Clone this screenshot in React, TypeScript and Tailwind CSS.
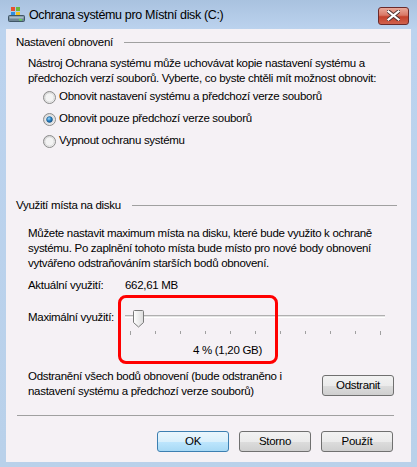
import React from 'react'

const font = { fontFamily: '"Segoe UI", "Liberation Sans", Arial, sans-serif' }

const Radio = ({ checked }: { checked?: boolean }) => (
	<svg width="13" height="13" viewBox="0 0 13 13" className="shrink-0">
		<defs>
			<linearGradient id="rb" x1="0" y1="0" x2="1" y2="1">
				<stop offset="0" stopColor="#cfcfcf" />
				<stop offset="1" stopColor="#f8f8f8" />
			</linearGradient>
			<radialGradient id="rd" cx="0.4" cy="0.35" r="0.7">
				<stop offset="0" stopColor="#9fd8fb" />
				<stop offset="0.5" stopColor="#2d86c7" />
				<stop offset="1" stopColor="#0b4f8a" />
			</radialGradient>
		</defs>
		<circle cx="6.5" cy="6.5" r="6" fill="url(#rb)" stroke="#8b8b8b" strokeWidth="1" />
		<circle cx="6.5" cy="6.5" r="4.5" fill="#f3f3f3" stroke="#d2d2d2" strokeWidth="0.6" />
		{checked && <circle cx="6.5" cy="6.5" r="3" fill="url(#rd)" stroke="#1b4f7a" strokeWidth="0.5" />}
	</svg>
)

const Btn = ({ children, primary }: { children: React.ReactNode; primary?: boolean }) => (
	<div
		className={
			'w-[72px] h-[21px] rounded-[3px] border flex items-center justify-center text-black ' +
			(primary
				? 'border-[#3c7fb1] bg-[linear-gradient(180deg,#eaf6fd_0%,#d9f0fc_50%,#bee6fd_51%,#a7d9f5_100%)]'
				: 'border-[#707070] bg-[linear-gradient(180deg,#f2f2f2_0%,#ebebeb_50%,#dddddd_51%,#cfcfcf_100%)]')
		}
	>
		{children}
	</div>
)

const GroupHead = ({ title, lineEnd }: { title: string; lineEnd: string }) => (
	<div className="flex items-center h-[15px] pl-[10px]">
		<span className="leading-[15px] whitespace-nowrap">{title}</span>
		<div className={'flex-1 h-px bg-[#a0a0a0] ml-[11px] ' + lineEnd} />
	</div>
)

export default function App() {
	return (
		<div
			className="w-[417px] h-[467px] flex flex-col bg-[linear-gradient(180deg,#a9c2df_0px,#bcd3ee_30px,#b9d1ea_100%)] text-[11.5px] tracking-[-0.3px] text-black"
			style={font}
		>
			{/* title bar */}
			<div className="h-[29px] flex items-center pl-[8px] pr-[8px]">
				<svg width="17" height="17" viewBox="0 0 17 17" className="shrink-0">
					<rect x="3" y="1" width="4" height="4" fill="#e8502c" />
					<rect x="8" y="1" width="4" height="4" fill="#6bb83b" />
					<rect x="3" y="6" width="4" height="3" fill="#2f8fe0" />
					<rect x="8" y="6" width="4" height="3" fill="#f5c21a" />
					<rect x="0.5" y="9.5" width="16" height="6" rx="1" fill="#6f8595" stroke="#3f5666" />
					<rect x="1.5" y="10.5" width="14" height="2" fill="#a9bccb" />
					<rect x="11" y="13" width="3" height="1.5" fill="#5ee04a" />
				</svg>
				<span className="ml-[4px] text-[12.5px] tracking-[-0.35px] leading-[15px] mt-[2px]">Ochrana systému pro Místní disk (C:)</span>
				<div className="flex-1" />
				<div className="w-[31px] h-[18px] rounded-[3px] border border-[#6b2a2a] bg-[linear-gradient(180deg,#e9a99a_0%,#d97866_45%,#c4412b_55%,#d0624d_100%)] flex items-center justify-center mt-[2px]">
					<svg width="13" height="11" viewBox="0 0 13 11">
						<path d="M1.5 1.5 L11.5 9.5 M11.5 1.5 L1.5 9.5" stroke="#4a3030" strokeWidth="4" strokeLinecap="square" />
						<path d="M1.5 1.5 L11.5 9.5 M11.5 1.5 L1.5 9.5" stroke="#ffffff" strokeWidth="2.2" strokeLinecap="square" />
					</svg>
				</div>
			</div>

			{/* client area */}
			<div className="relative mx-[6px] mb-[5px] flex-1 bg-[#f5f1f5] flex flex-col pt-[6px]">
				<GroupHead title="Nastavení obnovení" lineEnd="mr-[21px]" />
				<div className="pl-[22px] mt-[6px] leading-[15px] whitespace-nowrap">
					<div>Nástroj Ochrana systému může uchovávat kopie nastavení systému a</div>
					<div>předchozích verzí souborů. Vyberte, co byste chtěli mít možnost obnovit:</div>
				</div>
				<div className="pl-[37px] flex flex-col">
					<div className="h-[22px] flex items-center gap-[3px]"><Radio /><span>Obnovit nastavení systému a předchozí verze souborů</span></div>
					<div className="h-[22px] flex items-center gap-[3px]"><Radio checked /><span>Obnovit pouze předchozí verze souborů</span></div>
					<div className="h-[22px] flex items-center gap-[3px]"><Radio /><span>Vypnout ochranu systému</span></div>
				</div>

				<div className="mt-[46px]">
					<GroupHead title="Využití místa na disku" lineEnd="mr-[14px]" />
				</div>
				<div className="pl-[22px] mt-[13px] leading-[15px] whitespace-nowrap">
					<div>Můžete nastavit maximum místa na disku, které bude využito k ochraně</div>
					<div>systému. Po zaplnění tohoto místa bude místo pro nové body obnovení</div>
					<div>vytvářeno odstraňováním starších bodů obnovení.</div>
				</div>
				<div className="pl-[22px] mt-[7px] flex leading-[15px]">
					<span className="w-[97px]">Aktuální využití:</span>
					<span>662,61 MB</span>
				</div>

				<div className="pl-[22px] mt-[15px] flex h-[20px] items-center">
					<span className="w-[97px]">Maximální využití:</span>
					<div className="relative w-[260px] h-[20px]">
						<div className="absolute left-0 right-0 top-[7px] h-[3px] border-t border-[#b0b0b0] bg-[#e4e4e4] border-b border-b-white" />
						<svg width="11" height="18" viewBox="0 0 11 18" className="absolute left-[8px] top-[2px]">
							<defs>
								<linearGradient id="th" x1="0" y1="0" x2="1" y2="0">
									<stop offset="0" stopColor="#ffffff" />
									<stop offset="1" stopColor="#dcdcdc" />
								</linearGradient>
							</defs>
							<path d="M0.5 1.5 Q0.5 0.5 1.5 0.5 L9.5 0.5 Q10.5 0.5 10.5 1.5 L10.5 12.5 L5.5 17 L0.5 12.5 Z" fill="url(#th)" stroke="#7a7a7a" />
						</svg>
					</div>
				</div>
				<div className="flex pl-[124px] mt-[3px] h-[5px] items-start">
					{Array.from({ length: 11 }).map((_, i) => (
						<div key={i} className="w-[25px] shrink-0">
							<div className={'w-px bg-[#a0a0a0] ' + (i === 0 || i === 10 ? 'h-[4px]' : 'h-[3px]')} />
						</div>
					))}
				</div>
				<div className="pl-[187px] mt-[7px] leading-[15px]">4 % (1,20 GB)</div>

				<div className="flex items-start pl-[22px] pr-[17px] mt-[11px]">
					<div className="flex-1 leading-[15px] whitespace-nowrap">
						<div>Odstranění všech bodů obnovení (bude odstraněno i</div>
						<div>nastavení systému a předchozí verze souborů)</div>
					</div>
					<div className="mt-[6px]"><Btn>Odstranit</Btn></div>
				</div>

				<div className="ml-[11px] mr-[17px] h-px bg-[#a0a0a0] mt-[16px]" />

				<div className="flex justify-end gap-[10px] pr-[18px] mt-[15px]">
					<Btn primary>OK</Btn>
					<Btn>Storno</Btn>
					<Btn>Použít</Btn>
				</div>

				{/* annotation overlay */}
				<div className="absolute left-[112px] top-[266px] w-[160px] h-[69px] border-[3px] border-[#ff0000] rounded-[8px] pointer-events-none" />
			</div>
		</div>
	)
}
